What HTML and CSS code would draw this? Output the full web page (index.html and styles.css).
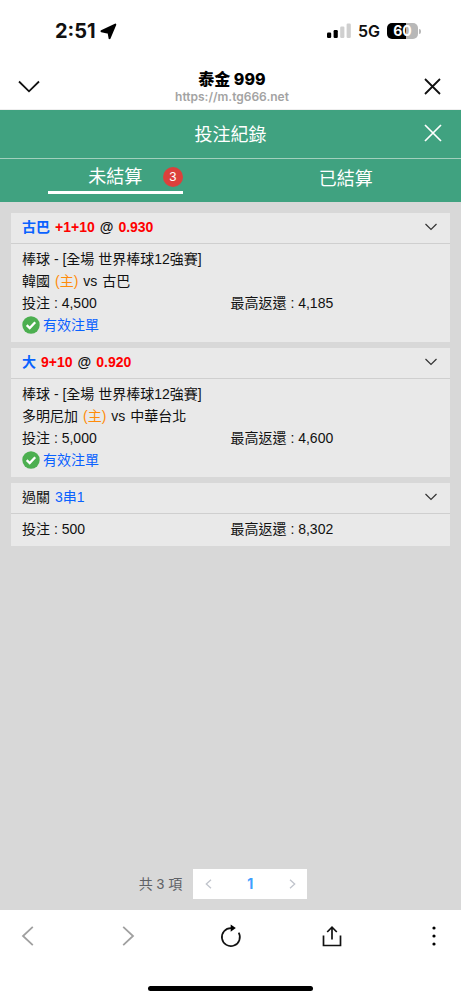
FILE: index.html
```html
<!DOCTYPE html>
<html lang="zh-Hant">
<head>
<meta charset="utf-8">
<meta name="viewport" content="width=device-width, initial-scale=1">
<title>投注紀錄</title>
<link rel="stylesheet" href="styles.css">
</head>
<body>
<div class="status-bar">
  <div class="status-time">
    <span>2:51</span>
    <svg width="17" height="17" viewBox="0 0 17 17" aria-hidden="true"><path d="M15.300 1.600 9.600 15.200 8.600 9.900 1.500 8.200Z" fill="#000" stroke="#000" stroke-width="2" stroke-linejoin="round"/></svg>
  </div>
  <div class="status-signal">
    <svg width="24" height="16" viewBox="0 0 24 16" aria-hidden="true">
      <rect x="0" y="9.500" width="4.200" height="5.500" rx="1.200"/>
      <rect x="6.600" y="7" width="4.200" height="8" rx="1.200"/>
      <rect x="13.200" y="3.500" width="4.200" height="11.500" rx="1.200" fill="#cfcfcf"/>
      <rect x="19.600" y="0.500" width="4.200" height="14.500" rx="1.200" fill="#cfcfcf"/>
    </svg>
    <span class="network">5G</span>
    <span class="battery"><span class="battery-body">60</span><span class="battery-tip"></span></span>
  </div>
</div>

<header class="browser-header">
  <button class="icon-button" type="button" aria-label="收合">
    <svg width="22" height="13" viewBox="0 0 22 13"><path d="M1 1.500 11 11.300 21 1.500" fill="none" stroke="#111" stroke-width="1.800"/></svg>
  </button>
  <div class="site">
    <div class="site-name">泰金 999</div>
    <div class="site-url">https://m.tg666.net</div>
  </div>
  <button class="icon-button" type="button" aria-label="關閉">
    <svg width="17" height="17" viewBox="0 0 17 17"><path d="M1 1 16 16M16 1 1 16" fill="none" stroke="#111" stroke-width="1.800"/></svg>
  </button>
</header>

<div class="title-bar">
  <h1 class="title">投注紀錄</h1>
  <button class="icon-button title-close" type="button" aria-label="關閉投注紀錄">
    <svg width="18" height="18" viewBox="0 0 18 18"><path d="M1 1 17 17M17 1 1 17" fill="none" stroke="#fff" stroke-width="1.700"/></svg>
  </button>
</div>

<nav class="tabs">
  <button class="tab" type="button"><span class="tab-label tab-active">未結算<span class="badge">3</span></span></button>
  <button class="tab" type="button"><span class="tab-label">已結算</span></button>
</nav>

<main class="content">
  <section class="card">
    <div class="card-head">
      <p class="words strong"><span class="blue">古巴</span> <span class="red">+1+10</span> <span>@</span> <span class="red">0.930</span></p>
      <button class="icon-button" type="button" aria-label="展開"><svg width="14" height="8" viewBox="0 0 14 8"><path d="M1.500 1 7 6.500 12.500 1" fill="none" stroke="#333" stroke-width="1.200"/></svg></button>
    </div>
    <div class="card-body">
      <p>棒球 - [全場 世界棒球12強賽]</p>
      <p class="words"><span>韓國</span> <span class="orange">(主)</span> <span>vs</span> <span>古巴</span></p>
      <div class="amounts"><span>投注 : 4,500</span><span>最高返還 : 4,185</span></div>
      <p class="valid"><svg width="18" height="18" viewBox="0 0 18 18" aria-hidden="true"><circle cx="9" cy="9" r="8.700" fill="#4caf50"/><path d="M4.700 9.200 7.700 12.100 13.200 6.200" fill="none" stroke="#fff" stroke-width="2.300"/></svg>有效注單</p>
    </div>
  </section>

  <section class="card">
    <div class="card-head">
      <p class="words strong"><span class="blue">大</span> <span class="red">9+10</span> <span>@</span> <span class="red">0.920</span></p>
      <button class="icon-button" type="button" aria-label="展開"><svg width="14" height="8" viewBox="0 0 14 8"><path d="M1.500 1 7 6.500 12.500 1" fill="none" stroke="#333" stroke-width="1.200"/></svg></button>
    </div>
    <div class="card-body">
      <p>棒球 - [全場 世界棒球12強賽]</p>
      <p class="words"><span>多明尼加</span> <span class="orange">(主)</span> <span>vs</span> <span>中華台北</span></p>
      <div class="amounts"><span>投注 : 5,000</span><span>最高返還 : 4,600</span></div>
      <p class="valid"><svg width="18" height="18" viewBox="0 0 18 18" aria-hidden="true"><circle cx="9" cy="9" r="8.700" fill="#4caf50"/><path d="M4.700 9.200 7.700 12.100 13.200 6.200" fill="none" stroke="#fff" stroke-width="2.300"/></svg>有效注單</p>
    </div>
  </section>

  <section class="card">
    <div class="card-head">
      <p class="words"><span>過關</span> <span class="blue">3串1</span></p>
      <button class="icon-button" type="button" aria-label="展開"><svg width="14" height="8" viewBox="0 0 14 8"><path d="M1.500 1 7 6.500 12.500 1" fill="none" stroke="#333" stroke-width="1.200"/></svg></button>
    </div>
    <div class="card-body">
      <div class="amounts"><span>投注 : 500</span><span>最高返還 : 8,302</span></div>
    </div>
  </section>

  <div class="pagination">
    <span class="total">共 3 項</span>
    <div class="pager">
      <button class="page-button" type="button" aria-label="上一頁"><svg width="7" height="10" viewBox="0 0 7 10"><path d="M6 0.700 1.300 5 6 9.300" fill="none" stroke="#c0c4cc" stroke-width="1.300"/></svg></button>
      <button class="page-button page-current" type="button">1</button>
      <button class="page-button" type="button" aria-label="下一頁"><svg width="7" height="10" viewBox="0 0 7 10"><path d="M1 0.700 5.700 5 1 9.300" fill="none" stroke="#c0c4cc" stroke-width="1.300"/></svg></button>
    </div>
  </div>
</main>

<footer class="browser-footer">
  <div class="toolbar">
    <button class="icon-button" type="button" aria-label="上一頁"><svg width="13" height="20" viewBox="0 0 13 20"><path d="M11.800 0.800 2 10 11.800 19.200" fill="none" stroke="#a0a0a0" stroke-width="1.800"/></svg></button>
    <button class="icon-button" type="button" aria-label="下一頁"><svg width="13" height="20" viewBox="0 0 13 20"><path d="M1.200 0.800 11 10 1.200 19.200" fill="none" stroke="#a0a0a0" stroke-width="1.800"/></svg></button>
    <button class="icon-button" type="button" aria-label="重新整理"><svg width="22" height="24" viewBox="0 0 22 24"><path d="M18.700 8.600A9 9 0 1 1 11 4.100H13.300" fill="none" stroke="#111" stroke-width="1.700"/><path d="M10.700 0.500 15.800 4.100 10.700 7.700Z" fill="#000"/></svg></button>
    <button class="icon-button" type="button" aria-label="分享"><svg width="20" height="22" viewBox="0 0 20 22"><path d="M1.500 10.500V20.500H18.500V10.500M10 14.500V2.500M5.200 7 10 2.200 14.800 7" fill="none" stroke="#111" stroke-width="1.700"/></svg></button>
    <button class="icon-button" type="button" aria-label="更多"><svg width="4" height="20" viewBox="0 0 4 20"><circle cx="2" cy="2" r="1.600"/><circle cx="2" cy="10" r="1.600"/><circle cx="2" cy="18" r="1.600"/></svg></button>
  </div>
  <div class="home-bar"></div>
</footer>
</body>
</html>
```

FILE: styles.css
```css
* {
  box-sizing: border-box;
}

body {
  margin: 0;
  min-height: 100vh;
  display: flex;
  flex-direction: column;
  background: #fff;
  color: #111;
  font: 14px/22px "Liberation Sans", "Noto Sans CJK TC", sans-serif;
}

p,
h1 {
  margin: 0;
}

button {
  border: 0;
  padding: 0;
  background: none;
  color: inherit;
  font: inherit;
}

svg {
  display: block;
}

.icon-button {
  display: flex;
  align-items: center;
  justify-content: center;
}

.status-bar {
  height: 62px;
  padding: 0 40px 0 55px;
  display: flex;
  align-items: center;
  justify-content: space-between;
  font-family: Inter, sans-serif;
}

.status-time {
  display: flex;
  align-items: center;
  gap: 4px;
  font-size: 20px;
  font-weight: 700;
}

.status-signal {
  display: flex;
  align-items: center;
}

.network {
  margin: 0 7px;
  font-size: 16px;
  font-weight: 600;
}

.battery {
  display: flex;
  align-items: center;
  gap: 1px;
}

.battery-body {
  width: 31px;
  height: 16px;
  border-radius: 5px;
  background: linear-gradient(to right, #000 60%, #b8b8b8 60%);
  color: #fff;
  font-size: 14px;
  font-weight: 700;
  line-height: 16px;
  text-align: center;
}

.battery-tip {
  width: 2px;
  height: 5px;
  border-radius: 0 2px 2px 0;
  background: #b8b8b8;
}

.browser-header {
  height: 48px;
  padding: 2px 20px 0 18px;
  display: grid;
  grid-template-columns: 22px 1fr 17px;
  align-items: center;
  border-bottom: 1px solid #eee;
}

.site {
  text-align: center;
  font-family: Inter, "Noto Sans CJK TC", sans-serif;
}

.site-name {
  color: #000;
  font-size: 16px;
  font-weight: 800;
  line-height: 20px;
}

.site-url {
  color: #a3a3a3;
  font-size: 12px;
  font-weight: 600;
  line-height: 16px;
}

.title-bar {
  position: relative;
  height: 49px;
  padding-bottom: 2px;
  display: flex;
  align-items: center;
  justify-content: center;
  border-bottom: 1px solid #a2d0bd;
  background: #40a280;
  color: #fff;
}

.title {
  font-family: "Noto Sans CJK TC", sans-serif;
  font-size: 18px;
  font-weight: 400;
}

.title-close {
  position: absolute;
  right: 19px;
}

.tabs {
  display: flex;
  height: 43px;
  padding-bottom: 7px;
  background: #40a280;
  color: #fff;
}

.tab {
  flex: 1;
  display: flex;
  align-items: center;
  justify-content: center;
}

.tab-label {
  position: relative;
  width: 135px;
  font-family: "Noto Sans CJK TC", sans-serif;
  font-size: 18px;
  line-height: 28px;
}

.tab-active {
  padding-bottom: 2px;
  border-bottom: 3px solid #fff;
}

.badge {
  position: absolute;
  top: 6px;
  right: 0;
  width: 20px;
  height: 20px;
  border-radius: 50%;
  background: #db403b;
  font-family: "Liberation Sans", sans-serif;
  font-size: 13px;
  line-height: 20px;
}

.content {
  flex: 1;
  padding: 11px;
  display: flex;
  flex-direction: column;
  gap: 6px;
  background: #d8d8d8;
}

.card {
  background: #e9e9e9;
}

.card-head {
  height: 31px;
  padding: 0 12px 2px 11px;
  display: flex;
  align-items: center;
  justify-content: space-between;
  border-bottom: 1px solid #cfcfcf;
}

.card-body {
  padding: 4px 11px 6px;
}

.words {
  display: flex;
  gap: 5px;
}

.strong {
  font-weight: 700;
}

.blue,
.valid {
  color: #0a62ff;
}

.red {
  color: #f00;
}

.orange {
  color: #ff8c0a;
}

.amounts {
  display: grid;
  grid-template-columns: 1fr 1fr;
}

.valid {
  display: flex;
  align-items: center;
  gap: 3px;
}

.pagination {
  margin-top: auto;
  display: flex;
  align-items: center;
  justify-content: center;
  gap: 11px;
  padding-right: 15px;
  color: #606266;
  font-size: 14px;
}

.pager {
  display: flex;
  background: #fff;
}

.page-button {
  display: flex;
  align-items: center;
  justify-content: center;
  width: 30px;
  height: 30px;
}

.page-current {
  width: 54px;
  color: #409eff;
  font-family: Inter, sans-serif;
  font-weight: 700;
}

.browser-footer {
  height: 90px;
  padding: 12px 16px 9px;
  display: flex;
  flex-direction: column;
  align-items: center;
  justify-content: space-between;
}

.toolbar {
  width: 100%;
  height: 28px;
  display: flex;
  align-items: center;
  justify-content: space-between;
}

.toolbar .icon-button {
  width: 22px;
}

.home-bar {
  width: 36%;
  height: 5px;
  min-width: 165px;
  border-radius: 3px;
  background: #000;
}
```
